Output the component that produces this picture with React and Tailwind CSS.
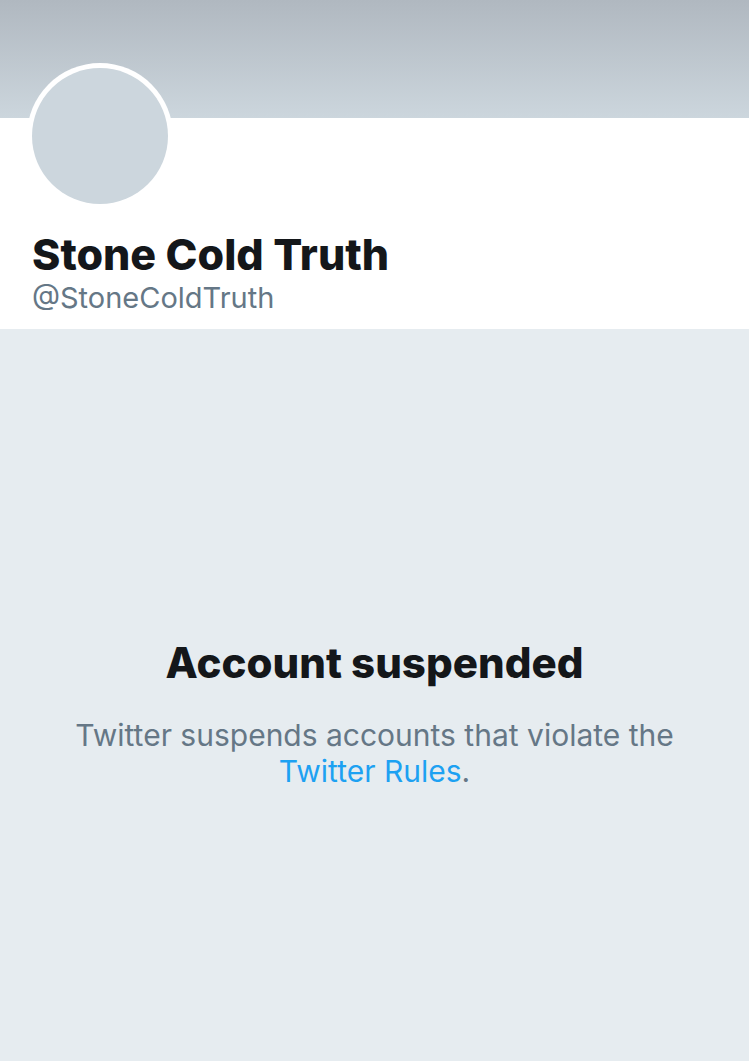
import React from 'react';

function Avatar() {
    return (
        <div className="absolute left-[27px] top-[63px] w-[146px] h-[146px] rounded-full bg-white p-[5px]">
            <div className="w-full h-full rounded-full bg-[#ccd6dd]" />
        </div>
    );
}

export default function App() {
    return (
        <div className="min-h-[1061px] w-full bg-[#e6ecf0] font-['Inter','Liberation_Sans',sans-serif]">
            {/* Cabecera del perfil */}
            <div className="relative bg-white">
                <div className="h-[118px] bg-gradient-to-b from-[#b0b8c0] to-[#ccd6dd]" />
                <Avatar />
                <div className="px-[32px] pt-[111px] pb-[12px]">
                    <h1 className="text-[43px] leading-[50px] font-extrabold text-[#14171a]">Stone Cold Truth</h1>
                    <p className="text-[29px] leading-[38px] text-[#657786]">@StoneColdTruth</p>
                </div>
            </div>

            {/* Mensaje de cuenta suspendida */}
            <div className="flex flex-col items-center text-center pt-[309px] px-[40px]">
                <h2 className="text-[42px] leading-[50px] font-extrabold text-[#14171a]">Account suspended</h2>
                <p className="mt-[29px] text-[30px] leading-[36px] text-[#657786]">
                    Twitter suspends accounts that violate the{' '}
                    <br />
                    <a href="#" className="text-[#1da1f2]">Twitter Rules</a>.
                </p>
            </div>
        </div>
    );
}
